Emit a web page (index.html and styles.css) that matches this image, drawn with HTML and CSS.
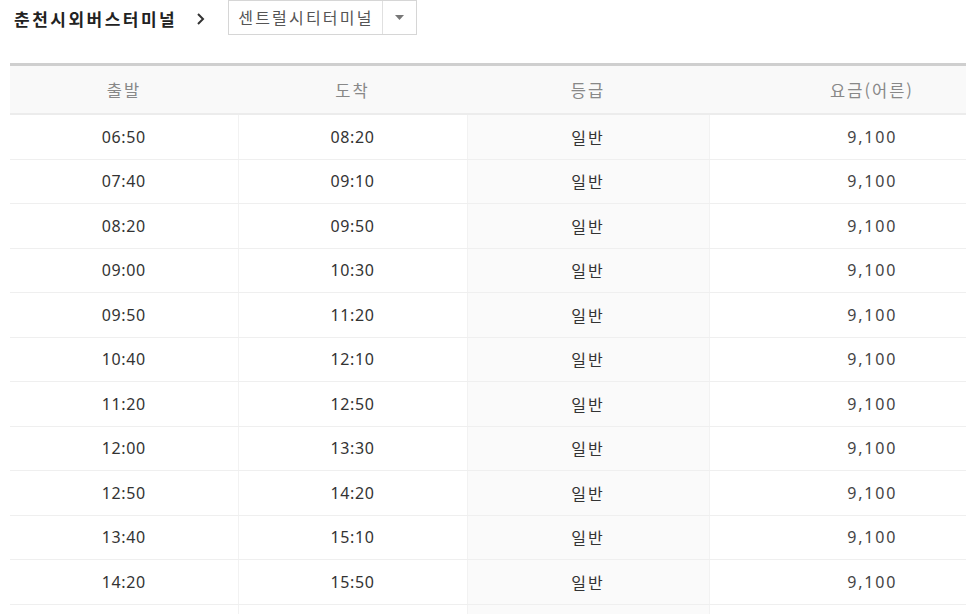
FILE: index.html
```html
<!DOCTYPE html>
<html lang="ko">
<head>
<meta charset="utf-8">
<title>시간표</title>
<link rel="stylesheet" href="styles.css">
</head>
<body>
<div class="crumb">
  <span class="from">춘천시외버스터미널</span>
  <svg class="chev" width="10" height="14" viewBox="0 0 10 14"><polyline points="2,2 7,7 2,12" fill="none" stroke="#333" stroke-width="2"/></svg>
  <div class="select">
    <span class="sel-text">센트럴시티터미널</span>
    <span class="sel-btn"><svg width="9" height="5" viewBox="0 0 9 5"><polygon points="0,0 9,0 4.5,5" fill="#777"/></svg></span>
  </div>
</div>
<table class="tt">
  <thead>
    <tr><th class="c1">출발</th><th class="c2">도착</th><th class="c3">등급</th><th class="c4">요금(어른)</th></tr>
  </thead>
  <tbody>
    <tr><td>06:50</td><td>08:20</td><td class="grade">일반</td><td class="fare">9,100</td></tr>
    <tr><td>07:40</td><td>09:10</td><td class="grade">일반</td><td class="fare">9,100</td></tr>
    <tr><td>08:20</td><td>09:50</td><td class="grade">일반</td><td class="fare">9,100</td></tr>
    <tr><td>09:00</td><td>10:30</td><td class="grade">일반</td><td class="fare">9,100</td></tr>
    <tr><td>09:50</td><td>11:20</td><td class="grade">일반</td><td class="fare">9,100</td></tr>
    <tr><td>10:40</td><td>12:10</td><td class="grade">일반</td><td class="fare">9,100</td></tr>
    <tr><td>11:20</td><td>12:50</td><td class="grade">일반</td><td class="fare">9,100</td></tr>
    <tr><td>12:00</td><td>13:30</td><td class="grade">일반</td><td class="fare">9,100</td></tr>
    <tr><td>12:50</td><td>14:20</td><td class="grade">일반</td><td class="fare">9,100</td></tr>
    <tr><td>13:40</td><td>15:10</td><td class="grade">일반</td><td class="fare">9,100</td></tr>
    <tr><td>14:20</td><td>15:50</td><td class="grade">일반</td><td class="fare">9,100</td></tr>
    <tr><td></td><td></td><td class="grade"></td><td class="fare"></td></tr>
  </tbody>
</table>
</body>
</html>
```
FILE: styles.css
```css
html, body {
  margin: 0;
  padding: 0;
  overflow: hidden;
  background: #fff;
  font-family: "Noto Sans", "Noto Sans CJK KR", sans-serif;
}
.crumb {
  display: flex;
  align-items: center;
  height: 35px;
  padding-left: 14px;
}
.from {
  font-family: "Noto Sans CJK KR", sans-serif;
  font-size: 17px;
  font-weight: 700;
  color: #222;
  letter-spacing: 2.5px;
  line-height: 35px;
  margin-top: 2px;
}
.chev {
  margin-left: 19px;
  margin-right: 22px;
  margin-top: 2px;
}
.select {
  display: flex;
  align-items: stretch;
  width: 189px;
  height: 35px;
  box-sizing: border-box;
  border: 1px solid #d6d6d6;
}
.sel-text {
  flex: 1;
  padding-left: 9px;
  font-family: "Noto Sans CJK KR", sans-serif;
  font-size: 16px;
  color: #555;
  line-height: 32px;
  letter-spacing: 2.2px;
}
.sel-btn {
  width: 33px;
  border-left: 1px solid #e0e0e0;
  display: flex;
  align-items: center;
  justify-content: center;
}
.tt {
  margin-top: 28px;
  margin-left: 10px;
  width: 1025px;
  border-collapse: collapse;
  table-layout: fixed;
  border-top: 3px solid #cfcfcf;
}
.tt th {
  height: 47px;
  padding: 0;
  background: #f9f9f9;
  color: #888;
  font-family: "Noto Sans CJK KR", sans-serif;
  font-size: 16.5px;
  font-weight: 400;
  letter-spacing: 2px;
  border-bottom: 2px solid #ececec;
  text-align: center;
}
.tt .c1 { width: 228px; }
.tt .c2 { width: 229px; }
.tt .c3 { width: 242px; }
.tt .c4 { width: 326px; }
.tt td {
  height: 43.5px;
  padding: 0;
  text-align: center;
  font-size: 16px;
  color: #333;
  letter-spacing: 0.6px;
  border-bottom: 1px solid #efefef;
  border-left: 1px solid #f2f2f2;
}
.tt td:first-child { border-left: none; }
.tt td.grade {
  background: #fafafa;
  font-family: "Noto Sans CJK KR", sans-serif;
  letter-spacing: 2px;
}
.tt td.fare { color: #444; letter-spacing: 1.8px; }
```
